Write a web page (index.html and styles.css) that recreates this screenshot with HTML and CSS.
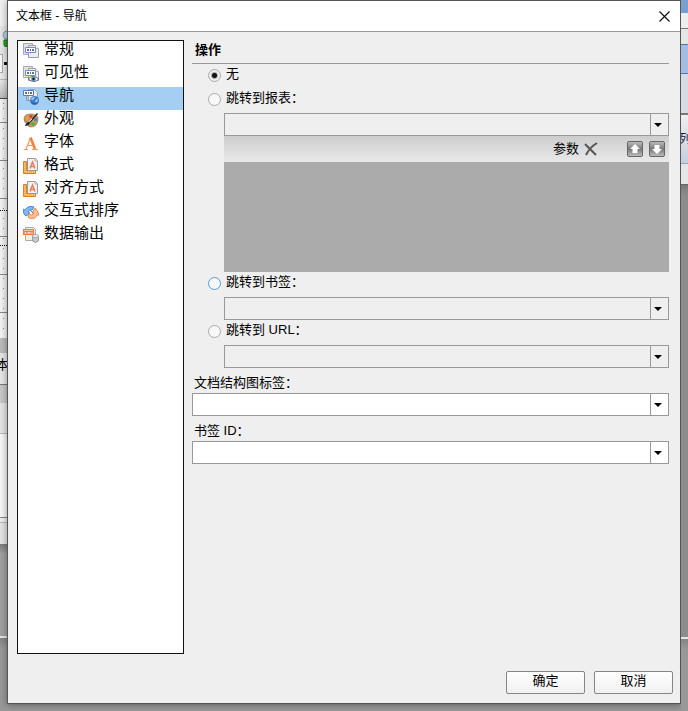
FILE: index.html
```html
<!DOCTYPE html>
<html lang="zh-CN">
<head>
<meta charset="utf-8">
<title>文本框 - 导航</title>
<link rel="stylesheet" href="styles.css">
</head>
<body>
<svg class="defs" aria-hidden="true">
  <symbol id="i-pages" viewBox="0 0 16 16">
    <path d="M.5.5h9v11h-9z" fill="#e2e2e4" stroke="#a9a9a9"/>
    <path d="M5.500 2.500h7l3 3v9h-10z" fill="#ececec" stroke="#a0a0a0"/>
    <path d="M12.500 2.500v3h3" fill="#fff" stroke="#b5b5b5"/>
    <path d="M2.500 4.500h10v5h-10z" fill="#fff" stroke="#6f8bd8"/>
    <path d="M4 6h2v2H4zM7 6h1v2H7zM9 6h2v2H9z" fill="#6a7086"/>
  </symbol>
  <symbol id="i-eye" viewBox="0 0 16 16">
    <use href="#i-pages"/>
    <path d="M5 13q5-5 11 0-5 5-11 0z" fill="#fff" stroke="#666"/>
    <circle cx="10.500" cy="13" r="2.300" fill="#4e86c4"/><circle cx="10.500" cy="13" r="1" fill="#111"/>
  </symbol>
  <symbol id="i-nav" viewBox="0 0 16 16">
    <path d="M5.500.5h6l3 3v8h-9z" fill="#e9e9e9" stroke="#a0a0a0"/>
    <path d="M.5 1.500h10v5H.5z" fill="#fff" stroke="#5b74d0"/>
    <path d="M2 3h2v2H2zM5 3h1v2H5zM7 3h2v2H7z" fill="#5f6786"/>
    <path d="M3.500 7v4.500h4" fill="none" stroke="#8b98b8"/>
    <circle cx="11.500" cy="11.500" r="4.500" fill="#3a7dcb"/>
    <path d="M8 10q1-2.500 4-2l-1 2-2 1.500zM12.500 11l2-1.500q1 2.500-1 4.500l-1.500-1.500z" fill="#9cc6f0"/>
    <path d="M8.500 13.500q2.500 3 6 0" fill="none" stroke="#1c57a5"/>
  </symbol>
  <symbol id="i-palette" viewBox="0 0 16 16">
    <path d="M1 7q0-5 7-5 8 0 7 6-1 7-7 7-3 0-3-2 1-2-1-2-3 0-3-4z" fill="#c59a64" stroke="#8d6738" stroke-width=".6"/>
    <circle cx="4" cy="6" r="1.600" fill="#f6a12b"/><circle cx="8" cy="4.500" r="1.600" fill="#e33b2c"/>
    <circle cx="12.500" cy="7.500" r="1.700" fill="#3689df"/><circle cx="10" cy="12" r="1.800" fill="#42b83b"/>
    <path d="M2 14q1-4 4-4L14 1l1 1-8 9q-1 3-5 3z" fill="#252525"/>
    <path d="M6 10l3-3" stroke="#ddd"/>
  </symbol>
  <symbol id="i-font" viewBox="0 0 16 16">
    <path d="M1 14.500h4M9 14.500h6M3 14L7.500 3M5 10.500h6" fill="none" stroke="#f19a63" stroke-width="1.200"/>
    <path d="M7.500 2.500L12 14" fill="none" stroke="#f5803e" stroke-width="2.600"/>
  </symbol>
  <symbol id="i-format" viewBox="0 0 16 16">
    <path d="M.5 3.500h3v9h9v3H.5z" fill="#f5a646" stroke="#d9822a"/>
    <path d="M2 5v9h10" fill="none" stroke="#ffe0ad" stroke-dasharray="1 1"/>
    <path d="M4.500.5h8l2 2v10h-10z" fill="#eef1f5" stroke="#999"/>
    <path d="M12 .5V3h2.500" fill="#fff" stroke="#aaa"/>
    <path d="M7 10.500L9.500 4l2.500 6.500M8 8.500h3" fill="none" stroke="#f37b49" stroke-width="1.500"/>
  </symbol>
  <symbol id="i-sort" viewBox="0 0 16 16">
    <path d="M1 10L0 5l2 1q3-5 9-3l-2 3q-3-1-4 2l2 1-4 3z" fill="#80b9f6" stroke="#3581de" stroke-width=".9"/>
    <path d="M12 4l3 4 1 3h-2q-2 5-8 3l-1-2 1-3 2 2q3 0 3-2L9 9z" fill="#fbc19b" stroke="#ec7b3c" stroke-width=".9"/>
    <path d="M7 6l3 3" stroke="#3b83dc"/>
  </symbol>
  <symbol id="i-output" viewBox="0 0 16 16">
    <path d="M2.500.5h8l2 2v11h-10z" fill="#eee" stroke="#aaa"/>
    <path d="M0 2h11v6H0z" fill="#f47a35"/><path d="M1 3.500h9" stroke="#ffc79c"/>
    <path d="M2 5l1 2M3 5L2 7M5 7V5l1 1 1-1v2M9 5v2" stroke="#fff" stroke-width=".8" fill="none"/>
    <path d="M9.500 9v5q3 3 6 0V9z" fill="#c4c6c9" stroke="#8e9093" stroke-width=".8"/>
    <ellipse cx="12.500" cy="9" rx="3" ry="1.500" fill="#eee" stroke="#999" stroke-width=".8"/>
  </symbol>
</svg>
<div class="desktop">
  <aside class="edge edge-left" aria-hidden="true">
    <div class="l-menu"></div>
    <div class="l-tool"><svg viewBox="0 0 7 18"><circle cx="7" cy="6" r="4" fill="#b8d3df" stroke="#7e9eae"/><path d="M4 11h3v7H5v-2H4z" fill="#28b51e" stroke="#08720a"/></svg></div>
    <div class="l-combo"><i></i></div>
    <div class="l-shade"></div>
    <div class="l-canvas"></div>
    <div class="l-scroll"></div>
    <div class="l-label"><span>本</span></div>
    <div class="l-band"></div>
    <div class="l-head"></div>
    <div class="l-pane"></div>
    <div class="l-status"></div>
    <div class="back"></div>
    <div class="floor"></div>
  </aside>
  <main class="dialog">
    <header class="titlebar">
      <h1>文本框 - 导航</h1>
      <button class="close" aria-label="关闭"><svg viewBox="0 0 11 11"><path d="M.5.5l10 10M10.500.5l-10 10" stroke="#111" stroke-width="1.200"/></svg></button>
    </header>
    <div class="content">
      <nav class="pages">
        <a href="#"><svg><use href="#i-pages"/></svg><span>常规</span></a>
        <a href="#"><svg><use href="#i-eye"/></svg><span>可见性</span></a>
        <a href="#" class="current" aria-current="page"><svg><use href="#i-nav"/></svg><span>导航</span></a>
        <a href="#"><svg><use href="#i-palette"/></svg><span>外观</span></a>
        <a href="#"><svg><use href="#i-font"/></svg><span>字体</span></a>
        <a href="#"><svg><use href="#i-format"/></svg><span>格式</span></a>
        <a href="#"><svg><use href="#i-format"/></svg><span>对齐方式</span></a>
        <a href="#"><svg><use href="#i-sort"/></svg><span>交互式排序</span></a>
        <a href="#"><svg><use href="#i-output"/></svg><span>数据输出</span></a>
      </nav>
      <form class="settings" id="settings">
        <h2>操作</h2>
        <div class="actions">
          <label class="choice"><input type="radio" name="action" checked><span>无</span></label>
          <label class="choice"><input type="radio" name="action"><span>跳转到报表：</span></label>
          <div class="target">
            <div class="combo off"><select aria-label="跳转到报表" disabled><option></option></select></div>
            <div class="params">
              <span>参数</span>
              <button type="button" class="delete" aria-label="删除"><svg viewBox="0 0 14 14"><path d="M1 2l11 11M13 1Q6 5 2 13" fill="none" stroke="#555" stroke-width="2"/></svg></button>
              <button type="button" class="move" aria-label="上移"><svg viewBox="0 0 10 10"><path d="M5 0l5 5H7.500v4h-5V5H0z" fill="#fff"/></svg></button>
              <button type="button" class="move" aria-label="下移"><svg viewBox="0 0 10 10"><path d="M5 10L0 5h2.500V1h5v4H10z" fill="#fff"/></svg></button>
            </div>
            <div class="param-list"></div>
          </div>
          <label class="choice"><input type="radio" name="action" class="hot"><span>跳转到书签：</span></label>
          <div class="target combo off"><select aria-label="跳转到书签" disabled><option></option></select></div>
          <label class="choice"><input type="radio" name="action"><span>跳转到 URL：</span></label>
          <div class="target combo off"><select aria-label="跳转到 URL" disabled><option></option></select></div>
        </div>
        <label class="caption" for="doc-label">文档结构图标签：</label>
        <div class="combo"><select id="doc-label"><option></option></select></div>
        <label class="caption" for="bookmark">书签 ID：</label>
        <div class="combo"><select id="bookmark"><option></option></select></div>
      </form>
    </div>
    <footer class="buttons">
      <button form="settings">确定</button>
      <button type="button">取消</button>
    </footer>
  </main>
  <aside class="edge edge-right" aria-hidden="true">
    <div class="r-title"></div>
    <div class="r-menu"></div>
    <div class="r-tab"></div>
    <div class="r-ribbon"></div>
    <div class="r-column"><span>列</span></div>
    <div class="r-gap"></div>
    <div class="back"></div>
    <div class="floor"></div>
  </aside>
</div>
</body>
</html>
```

FILE: styles.css
```css
* { box-sizing: border-box; }
body {
  margin: 0;
  background: #999;
  color: #000;
  font: 13px/18px "Liberation Sans", "Noto Sans CJK SC", sans-serif;
}
button, select, input { margin: 0; font: inherit; color: inherit; }
svg { display: block; }
.defs { position: absolute; width: 0; height: 0; }

.desktop {
  display: grid;
  grid-template-columns: 7px 1fr 7px;
  min-height: 100vh;
  overflow: hidden;
}

/* Slices of the window behind the dialog */
.edge { display: flex; flex-direction: column; overflow: hidden; }
.edge > div { flex: none; overflow: hidden; }
.edge > .floor { flex: 1; }
.l-menu { height: 26px; background: #f0f0f0; }
.l-tool { height: 28px; padding-top: 3px; background: #e6e6e6; }
.l-tool svg { width: 7px; height: 18px; }
.l-combo { height: 26px; border-bottom: 1px solid #bbb; background: #ececec; }
.l-combo i { display: block; width: 3px; height: 19px; border: 1px solid #aaa; border-left: 0; background: #f8f8f8; }
.l-combo::after {
  content: "";
  display: block;
  width: 3px;
  height: 3px;
  margin: -11px 0 0 4px;
  background: #111;
}
.l-shade { height: 19px; border-bottom: 1px solid #444; background: linear-gradient(#e8e8e8, #bbb); }
.l-canvas {
  height: 239px;
  background:
    repeating-linear-gradient(90deg, #111 0 1px, transparent 1px 2px) 0 111px / 7px 1px no-repeat,
    repeating-linear-gradient(90deg, #111 0 1px, transparent 1px 2px) 0 146px / 7px 1px no-repeat,
    linear-gradient(#888, #888) 3px 4px / 1px 1px no-repeat,
    repeating-linear-gradient(transparent 0 9px, #888 9px 10px) 3px 0 / 1px 100% no-repeat,
    repeating-linear-gradient(#f2f2f2 0 23px, #888 23px 24px, #f2f2f2 24px 38px);
}
.l-scroll { height: 15px; background: #bbb; }
.l-label { height: 32px; padding-top: 3px; border-bottom: 1px solid #777; background: #e6e6e6; }
.l-label span { display: block; margin-left: -4px; }
.l-band { height: 18px; background: #c8c8c8; }
.l-head { height: 31px; border-bottom: 1px solid #bbb; background: #e4e4e4; }
.l-pane { height: 84px; border-bottom: 1px solid #888; background: #f6f6f6; }
.l-status { height: 26px; background: linear-gradient(#eee 0 4px, #bbb 4px 5px, #e4e4e4 5px); }
.r-title { height: 13px; background: #799ed1; }
.r-menu { height: 31px; background: linear-gradient(#eee 0 15px, #777 15px 16px, #e6e6e6 16px); }
.r-tab { height: 30px; border: solid #5078b8; border-width: 1px 0; background: #a2bce2; }
.r-ribbon { height: 41px; border-bottom: 2px solid #777; background: #d5dbe3; }
.r-column { height: 49px; padding-top: 15px; border-bottom: 1px solid #91a4bd; background: linear-gradient(#eee, #c7cfdb); }
.r-column span { display: block; margin-left: -2px; color: #223; font-size: 12px; }
.r-gap { height: 21px; border-bottom: 1px solid #666; background: #e6e6e6; }
.edge > .back { flex: 0 1 454px; border-bottom: 2px solid #e6e6e6; background: linear-gradient(#787878, #8c8c8c 10px); }
.edge-left > .back { flex-basis: 94px; background: linear-gradient(#7b7b7b, #a0a0a0 10px); }
.floor { background: linear-gradient(#848484, #989898 10px); }

.dialog {
  display: flex;
  flex-direction: column;
  margin-bottom: 7px;
  border: 1px solid #555;
  background: #efefef;
  box-shadow: 0 1px 7px rgba(0, 0, 0, .4);
}
.titlebar {
  display: flex;
  align-items: center;
  justify-content: space-between;
  height: 31px;
  padding: 0 9px 0 8px;
  border-bottom: 1px solid #999;
  background: #fff;
}
.titlebar h1 { margin: 0; font-size: 12px; font-weight: 400; }
.close { padding: 0 1px; border: 0; background: none; }
.close svg { width: 11px; height: 11px; }

.content { display: flex; flex: 1; gap: 8px; padding: 8px 11px 0 9px; }
.pages { width: 167px; border: 1px solid #111; background: #fff; }
.pages a {
  display: flex;
  gap: 5px;
  height: 23px;
  padding-left: 5px;
  color: #000;
  font-size: 15px;
  line-height: 16px;
  text-decoration: none;
}
.pages .current { background: #a5cff2; }
.pages svg { width: 16px; height: 16px; margin-top: 2px; }

.settings { flex: 1; min-width: 0; }
.settings h2 {
  height: 24px;
  margin: 0;
  padding: 1px 3px 0;
  border-bottom: 1px solid #999;
  font-size: 13px;
  font-weight: 700;
}
.actions { padding-left: 16px; }
.choice { display: flex; gap: 5px; height: 25px; }
.choice:first-child { height: 24px; }
.choice span { margin-top: 1px; }
.choice input {
  appearance: none;
  width: 13px;
  height: 13px;
  margin-top: 5px;
  border: 1px solid #aaa;
  border-radius: 50%;
  background: #f8f8f8;
}
.choice input:checked { background: radial-gradient(circle, #111 0 2px, #aaa 3px, #eee 4px); }
.choice .hot { border-color: #4a9fe0; }
.target { margin-left: 16px; }
.combo { display: flex; position: relative; height: 23px; }
.combo select {
  appearance: none;
  flex: 1;
  min-width: 0;
  padding: 0 22px 0 4px;
  border: 1px solid #999;
  border-radius: 0;
  background: linear-gradient(#999, #999) right 17px top / 1px 100% no-repeat #fff;
}
.combo.off select { background-color: #efefef; opacity: 1; }
.combo::after {
  content: "";
  position: absolute;
  top: 10px;
  right: 7px;
  border: solid transparent;
  border-width: 4px 4px 0;
  border-top-color: #000;
  pointer-events: none;
}
.params {
  display: flex;
  align-items: center;
  justify-content: flex-end;
  height: 26px;
  padding-right: 4px;
  background: linear-gradient(#cdcdcd, #e9e9e9);
}
.params button { padding: 0; }
.delete { margin: 0 29px 0 5px; border: 0; background: none; }
.delete svg { width: 14px; height: 14px; }
.move {
  display: grid;
  place-items: center;
  width: 16px;
  height: 16px;
  border: 1px solid #666;
  border-radius: 2px;
  background: linear-gradient(#bbb, #777 50%, #bbb);
}
.move + .move { margin-left: 6px; }
.move svg { width: 10px; height: 10px; }
.param-list { height: 110px; background: #ababab; }
.caption { display: block; height: 25px; padding: 6px 2px 0; }

.buttons { display: flex; justify-content: flex-end; gap: 9px; padding: 17px 7px 9px; }
.buttons button {
  width: 79px;
  height: 23px;
  padding: 0 0 3px;
  border: 1px solid #858585;
  border-radius: 2px;
  background: linear-gradient(#fff, #f0f0f0);
  line-height: 16px;
}
```
